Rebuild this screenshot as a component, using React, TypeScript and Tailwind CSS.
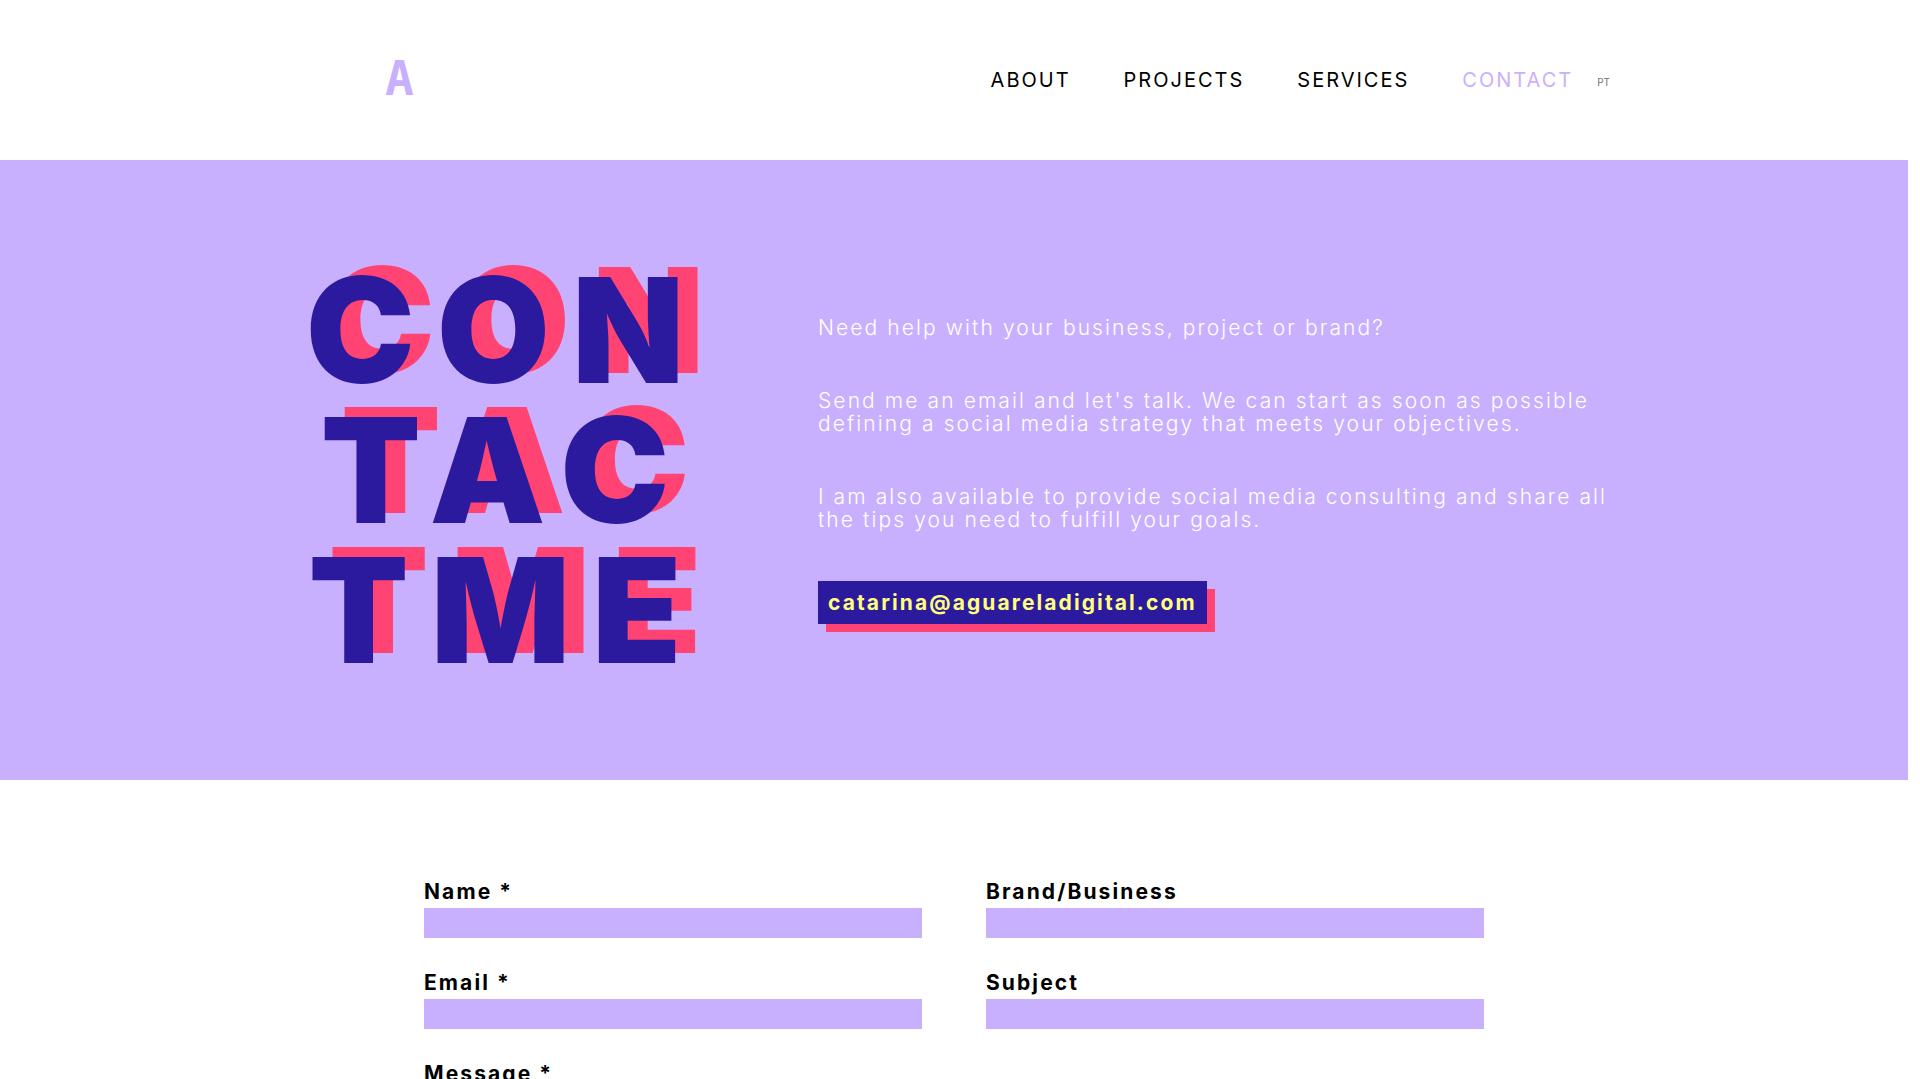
import React from "react";

const NAV = ["About", "Projects", "Services", "Contact"];

const FIELDS = [
  { id: "name", label: "Name *", type: "text" },
  { id: "brand", label: "Brand/Business", type: "text" },
  { id: "email", label: "Email *", type: "email" },
  { id: "subject", label: "Subject", type: "text" },
];

function Header() {
  return (
    <header className="mx-auto flex h-40 max-w-[1312px] items-center justify-between pl-[87px]">
      <a
        href="#home"
        className="pb-1 font-['DejaVu_Sans_Mono',monospace] text-5xl leading-none font-bold text-[#c9b0ff]"
      >
        A
      </a>
      <nav className="flex items-center text-xl uppercase">
        <ul className="flex gap-[53px] tracking-widest">
          {NAV.map((item) => (
            <li key={item}>
              <a
                href={`#${item.toLowerCase()}`}
                className={item === "Contact" ? "text-[#c9b0ff]" : "text-black"}
              >
                {item}
              </a>
            </li>
          ))}
        </ul>
        <a href="#pt" className="ml-6 pt-1 text-[10px] text-neutral-500">
          PT
        </a>
      </nav>
    </header>
  );
}

function Hero() {
  return (
    <section className="bg-[#c9b0ff]">
      <div className="mx-auto flex min-h-[620px] max-w-[1340px] items-center">
        <h1 className="w-[444px] shrink-0 text-center text-[146px] leading-[140px] font-black tracking-[0.15em] text-[#2c1a9e] [text-shadow:20px_-10px_#ff4473]">
          CON
          <br />
          TAC
          <br />
          TME
        </h1>
        <div className="ml-[90px] text-[21px] leading-[23px] font-light tracking-widest text-white">
          <p>Need help with your business, project or brand?</p>
          <p className="mt-[50px]">
            Send me an email and let's talk. We can start as soon as possible
            <br />
            defining a social media strategy that meets your objectives.
          </p>
          <p className="mt-[50px]">
            I am also available to provide social media consulting and share all
            <br />
            the tips you need to fulfill your goals.
          </p>
          <a
            href="mailto:catarina@aguareladigital.com"
            className="mt-[50px] inline-block bg-[#2c1a9e] px-[10px] py-[10px] font-bold text-[#ffff7d] shadow-[8px_8px_0_#ff4473]"
          >
            catarina@aguareladigital.com
          </a>
        </div>
      </div>
    </section>
  );
}

function ContactForm() {
  return (
    <form className="mx-auto grid max-w-[1060px] grid-cols-2 gap-x-16 gap-y-[30px] pt-[97px] text-[21px] font-bold tracking-widest text-black">
      {FIELDS.map((field) => (
        <div key={field.id} className="flex flex-col">
          <label htmlFor={field.id} className="pb-0.5 leading-[29px]">
            {field.label}
          </label>
          <input
            id={field.id}
            type={field.type}
            className="h-[30px] bg-[#c9b0ff] px-2 text-base outline-none"
          />
        </div>
      ))}
      <div className="col-span-2 flex flex-col">
        <label htmlFor="message" className="pb-0.5 leading-[29px]">
          Message *
        </label>
        <textarea id="message" rows={6} className="bg-[#c9b0ff] px-2 text-base outline-none" />
      </div>
    </form>
  );
}

export default function App() {
  return (
    <div className="h-screen overflow-hidden bg-white pr-3 font-['Inter',sans-serif]">
      <Header />
      <Hero />
      <ContactForm />
    </div>
  );
}
